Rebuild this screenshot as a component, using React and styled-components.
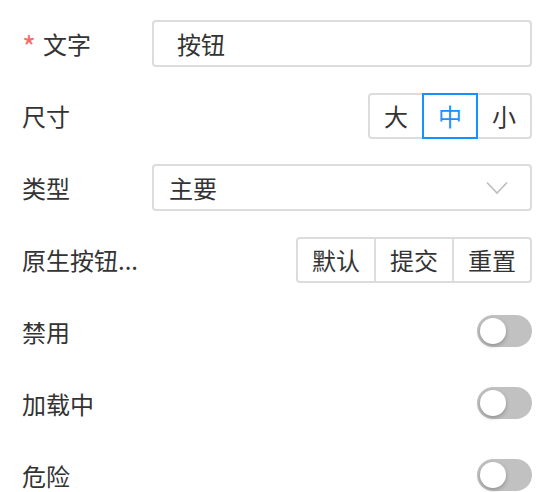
import React, { useState } from "react";
import styled, { createGlobalStyle } from "styled-components";

const GlobalStyle = createGlobalStyle`
  body {
    margin: 0;
    background: #fff;
    font-family: "Noto Sans CJK SC", "Noto Sans", sans-serif;
    color: #333;
  }
`;

const Form = styled.div`
  width: 548px;
  box-sizing: border-box;
  padding: 20px 16px 0 22px;
  display: flex;
  flex-direction: column;
  gap: 25px;
`;

const Row = styled.div`
  display: flex;
  align-items: center;
  height: 47px;
`;

const Label = styled.div`
  width: 130px;
  flex-shrink: 0;
  font-size: 24px;
  line-height: 1;
  color: #333;
  display: flex;
  align-items: center;
  white-space: nowrap;
`;

const Star = styled.span`
  color: #f56c6c;
  margin-right: 7px;
  font-size: 30px;
  line-height: 1;
  position: relative;
  top: 2px;
`;

const Control = styled.div`
  flex: 1;
  display: flex;
  justify-content: flex-end;
  align-items: center;
`;

const Field = styled.div`
  flex: 1;
  height: 47px;
  box-sizing: border-box;
  border: 2px solid #dcdcdc;
  border-radius: 4px;
  display: flex;
  align-items: center;
  justify-content: space-between;
  padding: 0 22px 0 ${(p) => (p.$select ? "15px" : "23px")};
  font-size: 24px;
  color: #333;
`;

const Group = styled.div`
  display: flex;
  height: 46px;
`;

const Seg = styled.div`
  width: ${(p) => p.$w}px;
  height: 100%;
  box-sizing: border-box;
  display: flex;
  align-items: center;
  justify-content: center;
  font-size: 24px;
  color: ${(p) => (p.$active ? "#1890ff" : "#333")};
  border: 2px solid ${(p) => (p.$active ? "#1890ff" : "#dcdcdc")};
  position: relative;
  z-index: ${(p) => (p.$active ? 1 : 0)};
  & + & {
    margin-left: -2px;
  }
  &:first-child {
    border-radius: 4px 0 0 4px;
  }
  &:last-child {
    border-radius: 0 4px 4px 0;
  }
`;

const Track = styled.div`
  width: 55px;
  height: 32px;
  border-radius: 16px;
  background: #c1c1c1;
  position: relative;
  top: -1px;
`;

const Knob = styled.div`
  position: absolute;
  top: 3px;
  left: 3px;
  width: 26px;
  height: 26px;
  border-radius: 50%;
  background: #fff;
  box-shadow: 0 2px 4px rgba(0, 0, 0, 0.25);
`;

const Chevron = () => (
  <svg width="22" height="14" viewBox="0 0 22 14">
    <polyline points="1,1.5 11,12 21,1.5" fill="none" stroke="#bdbdbd" strokeWidth="1.6" />
  </svg>
);

const Segmented = ({ items, width, active, onChange }) => (
  <Group>
    {items.map((it) => (
      <Seg key={it} $w={width} $active={it === active} onClick={() => onChange && onChange(it)}>
        {it}
      </Seg>
    ))}
  </Group>
);

const Switch = () => (
  <Track>
    <Knob />
  </Track>
);

export default function App() {
  const [size, setSize] = useState("中");

  return (
    <>
      <GlobalStyle />
      <Form>
        <Row>
          <Label>
            <Star>*</Star>文字
          </Label>
          <Field>按钮</Field>
        </Row>
        <Row>
          <Label>尺寸</Label>
          <Control>
            <Segmented items={["大", "中", "小"]} width={56} active={size} onChange={setSize} />
          </Control>
        </Row>
        <Row>
          <Label>类型</Label>
          <Field $select>
            主要
            <Chevron />
          </Field>
        </Row>
        <Row>
          <Label>原生按钮...</Label>
          <Control>
            <Segmented items={["默认", "提交", "重置"]} width={80} />
          </Control>
        </Row>
        <Row>
          <Label>禁用</Label>
          <Control>
            <Switch />
          </Control>
        </Row>
        <Row>
          <Label>加载中</Label>
          <Control>
            <Switch />
          </Control>
        </Row>
        <Row>
          <Label>危险</Label>
          <Control>
            <Switch />
          </Control>
        </Row>
      </Form>
    </>
  );
}
